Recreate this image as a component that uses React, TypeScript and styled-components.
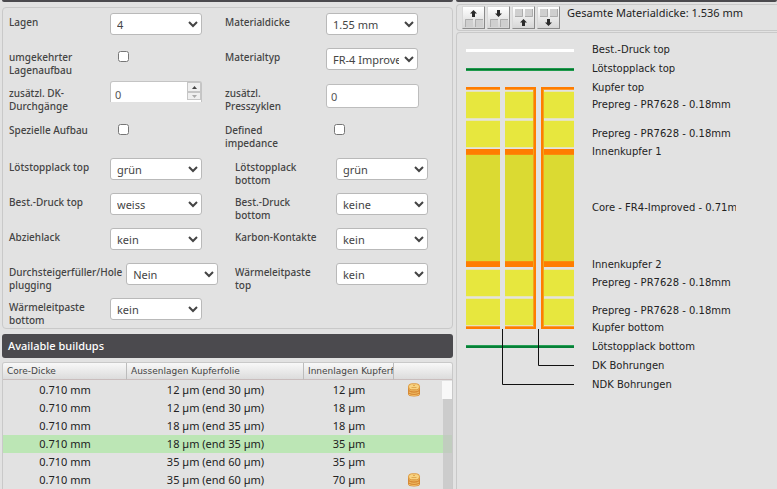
import React from "react";
import styled, { createGlobalStyle } from "styled-components";

const Global = createGlobalStyle`
  *, *::before, *::after { box-sizing: border-box; }
  body {
    margin: 0;
    background: #e2e2e2;
    color: #222;
    font: 11px/14px "Noto Sans", "Open Sans", sans-serif;
    overflow: hidden;
  }
`;

const Page = styled.main`
  display: grid;
  grid-template-columns: minmax(0, 451fr) minmax(0, 321fr);
  gap: 3px;
  height: 100vh;
  padding-left: 2px;
`;

const Column = styled.section`
  display: flex;
  flex-direction: column;
  min-width: 0;
  min-height: 0;
`;

const TitleEdge = styled.div<{ $gap: number }>`
  height: 2px;
  flex: none;
  margin-bottom: ${(p) => p.$gap}px;
  background: #4b4a4e;
  border-radius: 0 0 2px 2px;
`;

const Form = styled.form`
  display: flex;
  flex-direction: column;
  flex: none;
  padding: 5px 6px 1px;
  border: 1px solid #c9c9c9;
  border-radius: 4px;
`;

const FormRow = styled.div<{ $height: number }>`
  display: flex;
  min-height: ${(p) => p.$height}px;
`;

const Field = styled.div<{ $width: number }>`
  display: flex;
  align-items: flex-start;
  flex: 0 0 ${(p) => p.$width}px;
`;

const Label = styled.label`
  flex: none;
  min-width: 101px;
  padding: 3px 4px 0 0;
  color: #444;
  font-size: 10px;
  font-weight: 500;
  line-height: 13px;
  white-space: pre;
`;

const Select = styled.select`
  width: 92px;
  height: 22px;
  padding: 0 2px;
  border: 1px solid #b9b9b9;
  border-radius: 3px;
  background: #fff;
  color: #444;
  font: 11px "Noto Sans", sans-serif;
`;

const TextInput = styled.input`
  width: 93px;
  height: 24px;
  padding: 0 4px;
  border: 1px solid #bdbdbd;
  border-radius: 3px;
  background: #fff;
  color: #555;
  font: 11px "Noto Sans", sans-serif;
`;

const Checkbox = styled.input`
  width: 11px;
  height: 11px;
  margin: 3px 0 0 8px;
`;

const Spinner = styled.div`
  display: flex;
  width: 92px;
  height: 21px;
  margin-top: -3px;
  border: 1px solid #c4c4c4;
  border-bottom: 0;
  border-radius: 3px 3px 0 0;
  background: #fff;
`;

const SpinnerInput = styled.input`
  flex: 1;
  min-width: 0;
  padding: 5px 0 0 4px;
  border: 0;
  background: none;
  color: #555;
  font: 11px "Noto Sans", sans-serif;
`;

const SpinnerButtons = styled.div`
  display: grid;
  grid-template-rows: 10px 8px;
  width: 14px;
`;

const SpinnerButton = styled.button`
  display: grid;
  place-items: center;
  padding: 0;
  border: 1px solid #c6c6c6;
  background: #efefef;
`;

const BuildupsTitle = styled.h2`
  flex: none;
  margin: 5px 0 4px;
  padding: 0 6px;
  border-radius: 3px;
  background: #4b4a4e;
  color: #fff;
  font-size: 11px;
  font-weight: 500;
  line-height: 24px;
`;

const Grid = styled.div`
  position: relative;
  flex: 1;
  min-height: 0;
  overflow: hidden;
  border: 1px solid #c9c9c9;
  border-bottom: 0;
  border-radius: 3px 3px 0 0;
`;

const Table = styled.table`
  width: 100%;
  table-layout: fixed;
  border-collapse: separate;
  border-spacing: 0;
  tbody::before {
    content: "";
    display: block;
    height: 1px;
  }
`;

const Col = styled.col<{ $width?: number }>`
  width: ${(p) => (p.$width ? p.$width + "px" : "auto")};
`;

const HeadCell = styled.th`
  height: 17px;
  padding: 0 0 0 4px;
  overflow: hidden;
  border-right: 1px solid #bcbcbc;
  border-bottom: 1px solid #c9bdbd;
  background: linear-gradient(#f8f8f8, #dcdcdc);
  color: #444;
  font: 9px/15px "DejaVu Sans", sans-serif;
  text-align: left;
  white-space: nowrap;
  &:last-child { border-right: 0; }
`;

const BodyRow = styled.tr<{ $selected: boolean }>`
  background: ${(p) => (p.$selected ? "#bce6b5" : "transparent")};
`;

const Cell = styled.td`
  height: 18px;
  padding: 0;
  line-height: 18px;
  text-align: center;
  white-space: nowrap;
  svg { display: block; }
`;

const CostCell = styled(Cell)`
  padding-left: 13px;
`;

const ScrollTrack = styled.div`
  position: absolute;
  top: 18px;
  right: 0;
  bottom: 0;
  width: 10px;
  padding: 18px 0 0 1px;
  background: linear-gradient(#f8f8f8 18px, transparent 18px);
`;

const ScrollThumb = styled.div`
  height: 100%;
  background: rgba(196, 196, 196, 0.72);
`;

const Toolbar = styled.header`
  display: flex;
  flex: none;
  gap: 2px;
  height: 27px;
  margin-bottom: 1px;
  padding: 1px 0 0 5px;
  border: 1px solid #c9c9c9;
  border-right: 0;
  border-radius: 4px 0 0 4px;
`;

const ToolButton = styled.button`
  flex: none;
  width: 23px;
  height: 23px;
  padding: 0;
  border: 1px solid;
  border-color: #d8d8d8 #8a8a8a #8a8a8a #d8d8d8;
  background: linear-gradient(#fff, #d6d6d6);
  svg { display: block; }
`;

const Thickness = styled.output`
  margin-left: 5px;
  line-height: 14px;
  white-space: nowrap;
`;

const Stack = styled.div`
  display: flex;
  flex: 1;
  gap: 18px;
  padding: 9px 0 0 9px;
  border: 1px solid #c9c9c9;
  border-width: 1px 0 0 1px;
  border-radius: 4px 0 0 0;
  svg { flex: none; margin-top: 7px; }
`;

const LayerList = styled.ul`
  width: 144px;
  margin: 0;
  padding: 1px 0 0;
  list-style: none;
`;

const Layer = styled.li<{ $space: number }>`
  margin-top: ${(p) => p.$space}px;
  overflow: hidden;
  font: 10px/14px "DejaVu Sans", sans-serif;
  white-space: nowrap;
`;

type FieldData = {
  id: string;
  label: string;
  kind: "select" | "check" | "text" | "spinner";
  value?: string;
};

const rows: { height: number; left: number; fields: FieldData[] }[] = [
  { height: 35, left: 216, fields: [
    { id: "layers", label: "Lagen", kind: "select", value: "4" },
    { id: "thickness", label: "Materialdicke", kind: "select", value: "1.55 mm" },
  ] },
  { height: 36, left: 216, fields: [
    { id: "reversed", label: "umgekehrter\nLagenaufbau", kind: "check" },
    { id: "material", label: "Materialtyp", kind: "select", value: "FR-4 Improved" },
  ] },
  { height: 37, left: 216, fields: [
    { id: "passes", label: "zusätzl. DK-\nDurchgänge", kind: "spinner", value: "0" },
    { id: "cycles", label: "zusätzl.\nPresszyklen", kind: "text", value: "0" },
  ] },
  { height: 37, left: 216, fields: [
    { id: "special", label: "Spezielle Aufbau", kind: "check" },
    { id: "impedance", label: "Defined\nimpedance", kind: "check" },
  ] },
  { height: 35, left: 226, fields: [
    { id: "maskTop", label: "Lötstopplack top", kind: "select", value: "grün" },
    { id: "maskBottom", label: "Lötstopplack\nbottom", kind: "select", value: "grün" },
  ] },
  { height: 35, left: 226, fields: [
    { id: "printTop", label: "Best.-Druck top", kind: "select", value: "weiss" },
    { id: "printBottom", label: "Best.-Druck\nbottom", kind: "select", value: "keine" },
  ] },
  { height: 35, left: 226, fields: [
    { id: "peelable", label: "Abziehlack", kind: "select", value: "kein" },
    { id: "carbon", label: "Karbon-Kontakte", kind: "select", value: "kein" },
  ] },
  { height: 35, left: 226, fields: [
    { id: "plugging", label: "Durchsteigerfüller/Hole\nplugging", kind: "select", value: "Nein" },
    { id: "pasteTop", label: "Wärmeleitpaste\ntop", kind: "select", value: "kein" },
  ] },
  { height: 22, left: 226, fields: [
    { id: "pasteBottom", label: "Wärmeleitpaste\nbottom", kind: "select", value: "kein" },
  ] },
];

function Control({ field }: { field: FieldData }) {
  const { id, kind, value } = field;
  if (kind === "check") return <Checkbox id={id} type="checkbox" />;
  if (kind === "text") return <TextInput id={id} type="text" defaultValue={value} />;
  if (kind === "spinner")
    return (
      <Spinner>
        <SpinnerInput id={id} type="text" inputMode="numeric" defaultValue={value} />
        <SpinnerButtons>
          <SpinnerButton type="button" aria-label="Mehr">
            <svg width="5" height="3"><path d="M0 3 L2.5 0 L5 3Z" fill="#444" /></svg>
          </SpinnerButton>
          <SpinnerButton type="button" aria-label="Weniger">
            <svg width="5" height="3"><path d="M0 0 L2.5 3 L5 0Z" fill="#aaa" /></svg>
          </SpinnerButton>
        </SpinnerButtons>
      </Spinner>
    );
  return (
    <Select id={id} defaultValue={value}>
      <option>{value}</option>
    </Select>
  );
}

const Coins = () => (
  <svg width="14" height="14" viewBox="0 0 14 14" role="img" aria-label="Aufpreis">
    <path d="M1 3.500v7.500c0 1.700 2.500 2.500 6 2.500s6-.8 6-2.500V3.500z" fill="#d88a35" />
    <path d="M2 6.500c2 1.800 8 1.800 10 0M2 9c2 1.800 8 1.800 10 0M2 11.300c2 1.600 8 1.600 10 0" fill="none" stroke="#efbf68" />
    <rect x="1.500" y=".8" width="11" height="6" rx="3" fill="#f8d381" stroke="#dc9a42" />
    <path d="M4.500 4.500h5M6 2.500h2" stroke="#e0a850" />
  </svg>
);

const buildups = [
  ["0.710 mm", "12 µm (end 30 µm)", "12 µm", true],
  ["0.710 mm", "12 µm (end 30 µm)", "18 µm", false],
  ["0.710 mm", "18 µm (end 35 µm)", "18 µm", false],
  ["0.710 mm", "18 µm (end 35 µm)", "35 µm", false],
  ["0.710 mm", "35 µm (end 60 µm)", "35 µm", false],
  ["0.710 mm", "35 µm (end 60 µm)", "70 µm", true],
] as const;
const selected = 3;

const tools = [
  { name: "Oben hinzufügen", low: true, up: true },
  { name: "Oben entfernen", low: true, up: false },
  { name: "Unten entfernen", low: false, up: true },
  { name: "Unten hinzufügen", low: false, up: false },
];

function ToolIcon({ low, up }: { low: boolean; up: boolean }) {
  const y = low ? 12 : 2;
  const a = low ? 3 : 12;
  return (
    <svg width="21" height="21" viewBox="0 0 21 21">
      {[2, 12].map((x) => (
        <g key={x}>
          <rect x={x} y={y} width="8" height="8" fill="#cfcfcf" />
          <path
            d={low
              ? `M${x + 0.5} ${y + 8}V${y + 0.5}H${x + 8}`
              : `M${x} ${y + 7.5}H${x + 7.5}V${y}`}
            fill="none"
            stroke="#adadad"
          />
        </g>
      ))}
      <path
        d={up
          ? `M10.500 ${a}l3.500 3.500h-2v3.500h-3v-3.500h-2z`
          : `M10.500 ${a + 7}l3.500-3.500h-2v-3.500h-3v3.500h-2z`}
        fill="#2a2a2a"
      />
    </svg>
  );
}

const layers: [string, number][] = [
  ["Best.-Druck top", 0],
  ["Lötstopplack top", 5],
  ["Kupfer top", 5],
  ["Prepreg - PR7628 - 0.18mm", 3],
  ["Prepreg - PR7628 - 0.18mm", 15],
  ["Innenkupfer 1", 4],
  ["Core - FR4-Improved - 0.71mm", 42],
  ["Innenkupfer 2", 43],
  ["Prepreg - PR7628 - 0.18mm", 4],
  ["Prepreg - PR7628 - 0.18mm", 14],
  ["Kupfer bottom", 3],
  ["Lötstopplack bottom", 5],
  ["DK Bohrungen", 5],
  ["NDK Bohrungen", 5],
];

const segments = [[0, 34], [39, 31], [75, 33]];
const prepregs = [42, 71, 220, 249];

const StackDrawing = () => (
  <svg width="108" height="338" viewBox="0 0 108 338" role="img" aria-label="Lagenaufbau">
    <rect y="0" width="108" height="3" fill="#fff" />
    <rect y="19" width="108" height="3" fill="#1e9a4c" />
    <rect y="20" width="108" height="1" fill="#04742f" />
    {segments.map(([x, w]) => (
      <g key={x}>
        <rect x={x} y="38" width={w} height="3" fill="#ff9a30" />
        <rect x={x} y="38" width={w} height="2" fill="#ff7d00" />
        {prepregs.map((y) => (
          <g key={y}>
            <rect x={x} y={y} width={w} height="28" fill="#e6e4b8" />
            <rect x={x} y={y + 1} width={w} height="26" fill="#e7e73e" />
          </g>
        ))}
        <rect x={x} y="106" width={w} height="106" fill="#dbda32" />
        <rect x={x} y="100" width={w} height="6" fill="#ff7d00" />
        <rect x={x} y="105" width={w} height="1" fill="#fa8c0c" />
        <rect x={x} y="212" width={w} height="6" fill="#ff7d00" />
        <rect x={x} y="212" width={w} height="1" fill="#fa8c0c" />
        <rect x={x} y="277" width={w} height="3" fill="#f99a3c" />
        <rect x={x} y="278" width={w} height="2" fill="#ff7d00" />
      </g>
    ))}
    <rect x="67" y="40" width="1" height="238" fill="#f0a41e" />
    <rect x="68" y="38" width="2" height="242" fill="#ff7d00" />
    <rect x="75" y="38" width="2" height="242" fill="#ff7d00" />
    <rect x="77" y="40" width="1" height="238" fill="#f0a41e" />
    <rect y="296" width="108" height="3" fill="#068038" />
    <rect y="296" width="108" height="1" fill="#27a055" />
    <path d="M36.500 280V335.500H108M72.500 280V316.500H108" fill="none" stroke="#111" />
  </svg>
);

export default function App() {
  return (
    <>
      <Global />
      <Page>
        <Column>
          <TitleEdge $gap={5} />
          <Form>
            {rows.map((row, i) => (
              <FormRow key={i} $height={row.height}>
                {row.fields.map((f, j) => (
                  <Field key={f.id} $width={j === 0 ? row.left : 195}>
                    <Label htmlFor={f.id}>{f.label}</Label>
                    <Control field={f} />
                  </Field>
                ))}
              </FormRow>
            ))}
          </Form>
          <BuildupsTitle>Available buildups</BuildupsTitle>
          <Grid>
            <Table>
              <colgroup>
                <Col $width={124} />
                <Col $width={177} />
                <Col $width={90} />
                <Col />
              </colgroup>
              <thead>
                <tr>
                  <HeadCell>Core-Dicke</HeadCell>
                  <HeadCell>Aussenlagen Kupferfolie</HeadCell>
                  <HeadCell>Innenlagen Kupferfolie</HeadCell>
                  <HeadCell aria-label="Aufpreis" />
                </tr>
              </thead>
              <tbody>
                {buildups.map(([core, outer, inner, extra], i) => (
                  <BodyRow key={i} $selected={i === selected}>
                    <Cell>{core}</Cell>
                    <Cell>{outer}</Cell>
                    <Cell>{inner}</Cell>
                    <CostCell>{extra && <Coins />}</CostCell>
                  </BodyRow>
                ))}
              </tbody>
            </Table>
            <ScrollTrack>
              <ScrollThumb />
            </ScrollTrack>
          </Grid>
        </Column>
        <Column>
          <TitleEdge $gap={2} />
          <Toolbar>
            {tools.map((t) => (
              <ToolButton key={t.name} type="button" aria-label={t.name}>
                <ToolIcon low={t.low} up={t.up} />
              </ToolButton>
            ))}
            <Thickness>Gesamte Materialdicke: 1.536 mm</Thickness>
          </Toolbar>
          <Stack>
            <StackDrawing />
            <LayerList>
              {layers.map(([name, space], i) => (
                <Layer key={i} $space={space}>{name}</Layer>
              ))}
            </LayerList>
          </Stack>
        </Column>
      </Page>
    </>
  );
}
